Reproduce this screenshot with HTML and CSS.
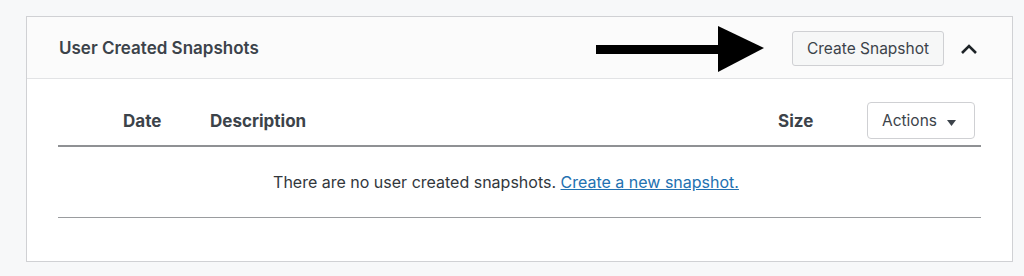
FILE: index.html
```html
<!DOCTYPE html>
<html>
<head>
<meta charset="utf-8">
<link rel="stylesheet" href="styles.css">
</head>
<body>
<div class="page">
  <div class="card">
    <div class="card-header">
      <h2 class="card-title">User Created Snapshots</h2>
      <div class="header-actions">
        <svg class="arrow" width="170" height="48" viewBox="0 0 170 48" aria-hidden="true">
          <rect x="0" y="19" width="124" height="9" fill="#000"/>
          <polygon points="122,0 168,22 122,46" fill="#000"/>
        </svg>
        <button class="btn-create">Create Snapshot</button>
        <svg class="chevron" width="18" height="12" viewBox="0 0 18 12" aria-hidden="true">
          <path d="M2 10 L9 3 L16 10" fill="none" stroke="#1d2327" stroke-width="2.6"/>
        </svg>
      </div>
    </div>
    <div class="card-body">
      <div class="table-head">
        <div class="col-date">Date</div>
        <div class="col-desc">Description</div>
        <div class="col-size">Size</div>
        <div class="col-actions">
          <button class="btn-actions">Actions <svg class="caret" width="9" height="6" viewBox="0 0 9 6" aria-hidden="true"><polygon points="0,0 9,0 4.5,6" fill="#3c434a"/></svg></button>
        </div>
      </div>
      <div class="empty-row">
        <span>There are no user created snapshots. <a href="#" class="link">Create a new snapshot.</a></span>
      </div>
    </div>
  </div>
</div>
</body>
</html>
```

FILE: styles.css
```css
html, body {
  margin: 0;
  padding: 0;
  background: #f7f8f9;
  font-family: Inter, "Liberation Sans", Arial, sans-serif;
  color: #3c434a;
}
.page {
  padding: 16px 11px 14px 26px;
}
.card {
  background: #fff;
  border: 1px solid #d0d1d4;
  height: 244px;
  box-sizing: content-box;
}
.card-header {
  height: 61px;
  background: #fbfbfb;
  border-bottom: 1px solid #e2e3e5;
  display: flex;
  align-items: center;
  justify-content: space-between;
  padding-left: 32px;
  padding-right: 34px;
}
.card-title {
  margin: 0;
  font-size: 17px;
  font-weight: 600;
  color: #3c434a;
  letter-spacing: 0;
}
.header-actions {
  display: flex;
  align-items: center;
}
.arrow {
  display: block;
  margin-right: 26px;
  margin-top: 5px;
}
.btn-create {
  width: 152px;
  height: 35px;
  font-family: inherit;
  font-size: 15.5px;
  color: #3c434a;
  background: #f6f7f7;
  border: 1px solid #cfd0d3;
  border-radius: 3px;
  padding: 0;
  margin-top: 2px;
}
.chevron {
  display: block;
  margin-left: 16px;
  margin-top: 3px;
}
.card-body {
  padding: 23px 31px 0 31px;
}
.table-head {
  display: flex;
  align-items: center;
  border-bottom: 2px solid #8f9194;
  padding-bottom: 6px;
  font-size: 17px;
  font-weight: 700;
  color: #3c434a;
}
.col-date {
  padding-left: 65px;
  width: 87px;
}
.col-desc {
  flex: 1;
}
.col-size {
  width: 89px;
}
.col-actions {
  padding-right: 6px;
}
.btn-actions {
  width: 108px;
  height: 37px;
  background: #fff;
  border: 1px solid #cfd0d3;
  border-radius: 4px;
  font-family: inherit;
  font-size: 15.5px;
  font-weight: 400;
  color: #3c434a;
  padding: 0 4px 0 0;
  display: flex;
  align-items: center;
  justify-content: center;
  gap: 10px;
}
.caret {
  display: block;
  margin-top: 5px;
}
.empty-row {
  height: 70px;
  display: flex;
  align-items: center;
  justify-content: center;
  border-bottom: 1px solid #9a9c9f;
  font-size: 16px;
  color: #32373c;
}
.empty-row span {
  margin-right: 27px;
}
.link {
  color: #2271b1;
  text-decoration: underline;
}
```
